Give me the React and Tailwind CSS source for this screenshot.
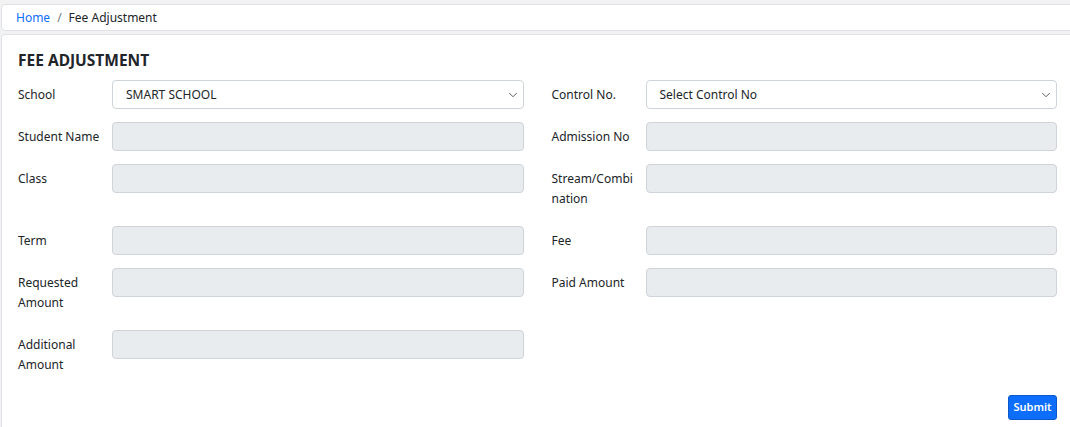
import { ChevronDown } from 'lucide-react'

const Select = ({ value }) => (
  <div className="flex-1 h-[29px] flex items-center justify-between pl-[13px] pr-[3px] bg-white border border-[#ced4da] rounded-[4px] text-[12px] text-[#212529]">
    <span>{value}</span>
    <ChevronDown size={14} strokeWidth={1.6} className="text-[#555]" />
  </div>
)

const Input = () => (
  <div className="flex-1 h-[29px] bg-[#e9ecef] border border-[#ced4da] rounded-[4px]" />
)

function Field({ label, children }) {
  return (
    <div className="flex items-start">
      <label className="w-[94px] shrink-0 py-[4.5px] leading-[20px] text-[12px] text-[#212529] whitespace-nowrap">
        {label}
      </label>
      {children || <Input />}
    </div>
  )
}

const Row = ({ children }) => (
  <div className="grid grid-cols-2 gap-x-[28px] mb-[13px]">{children}</div>
)

export default function App() {
  return (
    <div className="w-[1070px] h-[427px] overflow-hidden bg-[#f2f2f2] pt-[4px] pl-[1px]" style={{ fontFamily: '"Noto Sans", sans-serif' }}>
      {/* Breadcrumb */}
      <div className="h-[27px] bg-white border border-[#dee2e6] rounded-[4px] flex items-center pl-[14px] text-[12px] text-[#212529] -mr-2">
        <span className="text-[#0d6efd]">Home</span>
        <span className="px-[7px] text-[#6c757d]">/</span>
        <span>Fee Adjustment</span>
      </div>

      {/* Card */}
      <div className="mt-[3px] h-[400px] bg-white border border-[#dee2e6] rounded-[4px] -mr-2 pl-[16px] pr-[20px] pt-[14px]">
        <h1 className="text-[15.5px] font-bold text-[#212529] leading-[22px] mb-[9px]">FEE ADJUSTMENT</h1>

        <Row>
          <Field label="School"><Select value="SMART SCHOOL" /></Field>
          <Field label="Control No."><Select value="Select Control No" /></Field>
        </Row>
        <Row>
          <Field label="Student Name" />
          <Field label="Admission No" />
        </Row>
        <Row>
          <Field label="Class" />
          <Field label={<>Stream/Combi<br />nation</>} />
        </Row>
        <Row>
          <Field label="Term" />
          <Field label="Fee" />
        </Row>
        <Row>
          <Field label={<>Requested<br />Amount</>} />
          <Field label="Paid Amount" />
        </Row>
        <Row>
          <Field label={<>Additional<br />Amount</>} />
          <div />
        </Row>

        <div className="flex justify-end pt-[3px]">
          <button className="h-[25px] w-[49px] bg-[#0d6efd] border border-[#0a58ca] rounded-[3px] text-white text-[11px] font-semibold">
            Submit
          </button>
        </div>
      </div>
    </div>
  )
}
